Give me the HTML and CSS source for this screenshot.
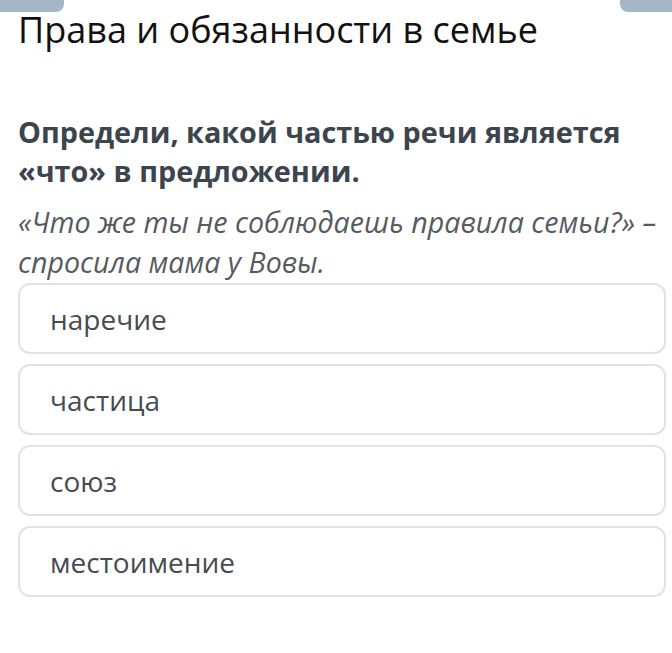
FILE: index.html
```html
<!DOCTYPE html>
<html lang="ru">
<head>
    <meta charset="UTF-8">
    <meta name="viewport" content="width=device-width, initial-scale=1.0">
    <title>Права и обязанности в семье</title>
    <link rel="stylesheet" href="styles.css">
</head>
<body>
    <div class="tabs">
        <div class="tab"></div>
        <div class="tab tab-right"></div>
    </div>
    <div class="page">
        <h1 class="title">Права и обязанности в семье</h1>
        <div class="question">Определи, какой частью речи является «что» в предложении.</div>
        <div class="quote">«Что же ты не соблюдаешь правила семьи?» – спросила мама у Вовы.</div>
        <div class="answers">
            <div class="answer">наречие</div>
            <div class="answer">частица</div>
            <div class="answer">союз</div>
            <div class="answer">местоимение</div>
        </div>
    </div>
</body>
</html>
```

FILE: styles.css
```css
body{
    margin: 0;
    background: #fff;
    font-family: "Open Sans", "Noto Sans", sans-serif;
}
.tabs{
    display: flex;
    justify-content: space-between;
    height: 12px;
}
.tab{
    width: 64px;
    height: 12px;
    background: #a5b7c5;
    border-radius: 0 0 8px 0;
}
.tab-right{
    width: 52px;
    border-radius: 0 0 0 8px;
}
.page{
    padding: 0 6px 0 18px;
}
.title{
    margin: -3px 0 0;
    font-size: 36px;
    font-weight: 400;
    line-height: 42px;
    color: #111;
}
.question{
    margin-top: 61px;
    font-size: 28.8px;
    font-weight: 700;
    line-height: 39px;
    color: #3c454d;
}
.quote{
    margin-top: 12px;
    font-size: 28.6px;
    font-style: italic;
    line-height: 40px;
    color: #555b60;
}
.answers{
    display: flex;
    flex-direction: column;
    gap: 10px;
    margin-top: 1px;
}
.answer{
    height: 67px;
    display: flex;
    align-items: center;
    padding-left: 30px;
    border: 2px solid #e2e2e2;
    border-radius: 12px;
    font-size: 28px;
    color: #464c52;
}
```
